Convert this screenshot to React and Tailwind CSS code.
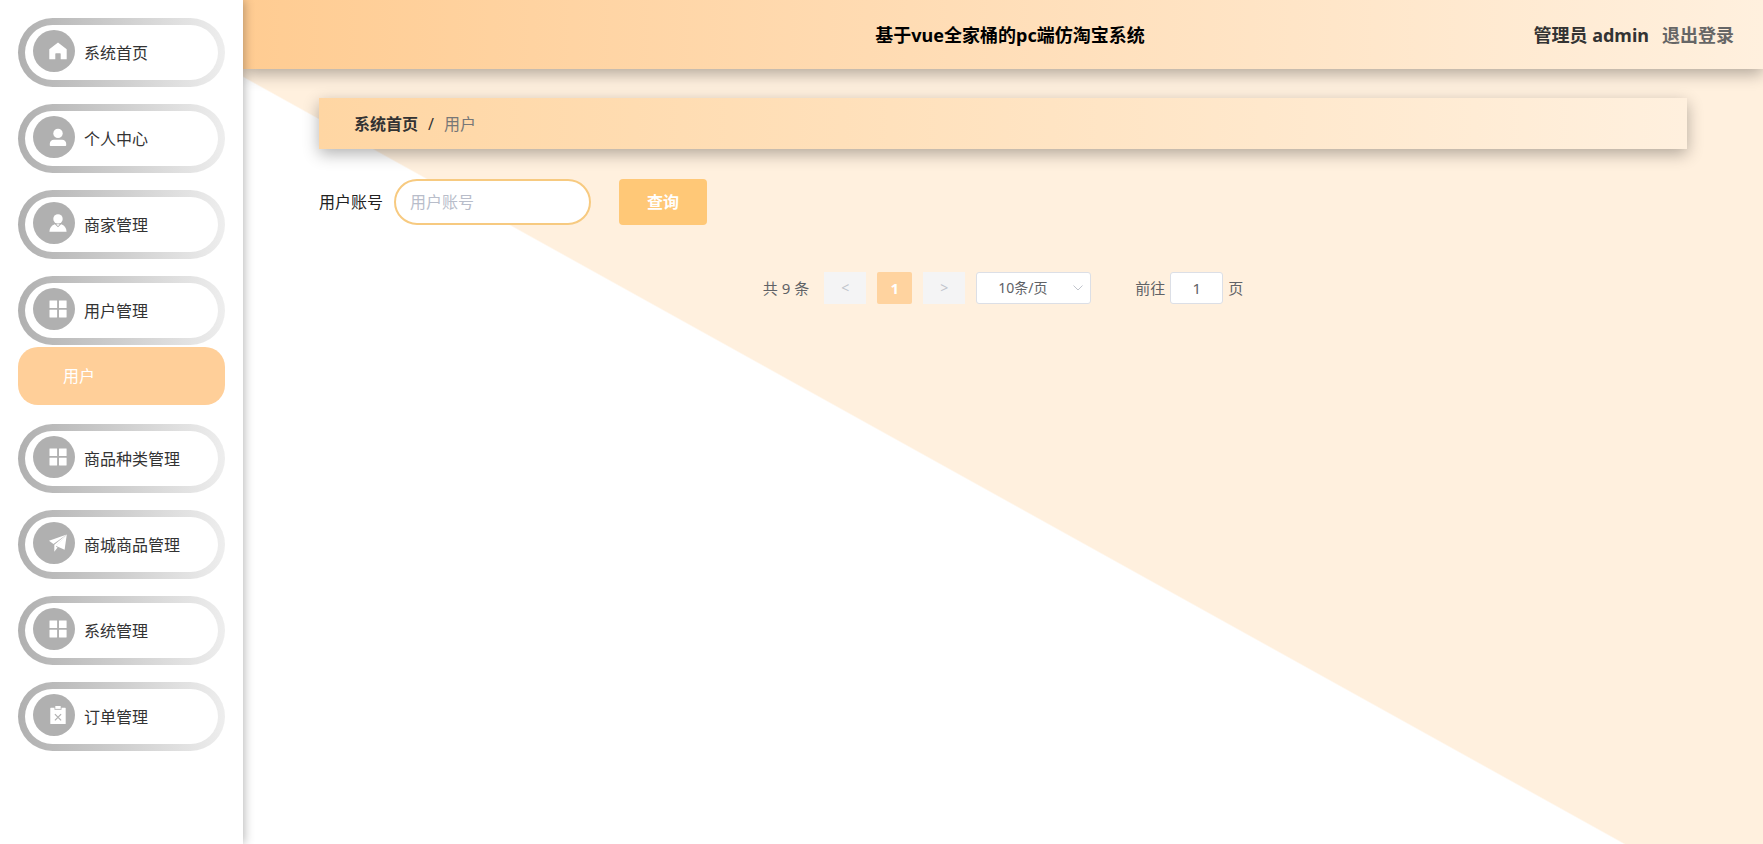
const HomeIcon = () => (
  <svg viewBox="0 0 18 18" className="size-[18px] fill-white" aria-hidden="true">
    <path d="M9 .6 17.700 7.200V16.900a.3.300 0 0 1-.3.300H11.700V11.900a.6.600 0 0 0-.6-.6H6.900a.6.600 0 0 0-.6.600V17.200H.6a.3.300 0 0 1-.3-.3V7.200Z" />
  </svg>
)

const UserIcon = () => (
  <svg viewBox="0 0 18 18" className="size-[18px] fill-white" aria-hidden="true">
    <circle cx="9" cy="5.4" r="4.7" />
    <path d="M5 11.8h8c2.6 0 4.2 1.7 4.2 4v1.5a.7.7 0 0 1-.7.7h-15a.7.7 0 0 1-.7-.7v-1.5c0-2.3 1.6-4 4.2-4Z" />
  </svg>
)

const CustomIcon = () => (
  <svg viewBox="0 0 18 18" className="size-[18px] fill-white" aria-hidden="true">
    <circle cx="9" cy="4.9" r="4.7" />
    <path d="M5.800 10.200 9 13.200 12.200 10.200c3.200 1 5.200 3.700 5.400 7.500H.4C.6 13.900 2.600 11.200 5.800 10.200Z" />
    <path d="M7.400 10.300h3.200L9 12.300Z" />
  </svg>
)

const MenuIcon = () => (
  <svg viewBox="0 0 18 18" className="size-[18px] fill-white" aria-hidden="true">
    <rect x=".5" y=".5" width="7.6" height="7.6" rx=".3" />
    <rect x="10" y=".5" width="7.6" height="7.6" rx=".3" />
    <rect x=".5" y="9.8" width="7.6" height="7.6" rx=".3" />
    <rect x="10" y="9.8" width="7.6" height="7.6" rx=".3" />
  </svg>
)

const PromotionIcon = () => (
  <svg viewBox="0 0 18 18" className="size-[18px] fill-white" aria-hidden="true">
    <path d="M17.8.4 0 6.800l4.400 3.100Z" />
    <path d="M17.800.4 5.300 10.700v7.100l3.300-4.200-1.700-.9Z" />
    <path d="M17.800.4 7.200 12.100l8.400 3.700Z" />
  </svg>
)

const ReleaseIcon = () => (
  <svg viewBox="0 0 18 18" className="size-[18px]" aria-hidden="true">
    <path className="fill-white" d="M1.8 1.7h3.7v2h7v-2h3.7a.5.5 0 0 1 .5.5v15.2a.5.5 0 0 1-.5.5H1.8a.5.5 0 0 1-.5-.5V2.2a.5.5 0 0 1 .5-.5Z" />
    <path className="fill-white" d="M6.300 0h5.400v2.900H6.300Z" />
    <path className="fill-none stroke-[#b0b0b0]" strokeWidth="1.2" d="m5.900 8.200 6.200 6.200m0-6.200-6.200 6.200" />
  </svg>
)

const menus = [
  { title: "系统首页", Icon: HomeIcon },
  { title: "个人中心", Icon: UserIcon },
  { title: "商家管理", Icon: CustomIcon },
  { title: "用户管理", Icon: MenuIcon, children: ["用户"] },
  { title: "商品种类管理", Icon: MenuIcon },
  { title: "商城商品管理", Icon: PromotionIcon },
  { title: "系统管理", Icon: MenuIcon },
  { title: "订单管理", Icon: ReleaseIcon },
]

const MenuItem = ({ menu }) => {
  const { title, Icon, children } = menu

  return (
    <li>
      <button className="block w-full h-[69px] p-[7px] rounded-full bg-linear-to-r from-[#b0b0b0] to-[#eeeeee] cursor-pointer">
        <span className="flex items-center h-full pl-2 rounded-full bg-white">
          <span className="flex items-center justify-end size-[42px] mb-1 pr-2 rounded-full bg-[#b0b0b0]">
            <Icon />
          </span>
          <span className="ml-[9px] text-base text-[#333]">{title}</span>
        </span>
      </button>
      {children && (
        <ul className="my-[2px]">
          {children.map((child) => (
            <li key={child}>
              <a href="#" className="flex items-center h-[58px] pl-[45px] rounded-[20px] bg-[#ffcf99] text-white">{child}</a>
            </li>
          ))}
        </ul>
      )}
    </li>
  )
}

const Sidebar = () => (
  <aside className="relative z-10 w-[243px] shrink-0 px-[18px] pt-[18px] bg-white shadow-[1px_0_10px_rgba(0,0,0,0.3)]">
    <nav>
      <ul className="flex flex-col gap-[17px]">
        {menus.map((menu) => (
          <MenuItem key={menu.title} menu={menu} />
        ))}
      </ul>
    </nav>
  </aside>
)

const Header = () => (
  <header className="grid grid-cols-[1fr_auto_1fr] items-center h-[69px] pl-[43px] pr-[29px] text-lg font-bold bg-linear-to-r from-[#ffcc92] to-[#fff0de] shadow-[0_5px_15px_rgba(0,0,0,0.3)]">
    <h1 className="col-start-2 text-black">基于vue全家桶的pc端仿淘宝系统</h1>
    <div className="flex justify-end gap-[13px]">
      <span className="text-[#333]">管理员 admin</span>
      <button className="text-[#666] cursor-pointer">退出登录</button>
    </div>
  </header>
)

const Breadcrumb = () => (
  <nav className="flex items-center h-[51px] px-[35px] bg-linear-to-r from-[#ffd6a3] to-[#fff0de] shadow-[0_5px_15px_rgba(0,0,0,0.3)]">
    <a href="#" className="font-bold text-[#333]">系统首页</a>
    <span className="mx-[10px] text-[#333]">/</span>
    <span className="text-[#777]">用户</span>
  </nav>
)

const SearchForm = () => (
  <form className="flex items-center mt-[30px]" onSubmit={(e) => e.preventDefault()}>
    <label htmlFor="account" className="text-[#222]">用户账号</label>
    <input
      id="account"
      type="text"
      placeholder="用户账号"
      className="w-[197px] h-[46px] ml-[11px] px-[14px] rounded-full border-2 border-[#f7ca80] bg-white text-[#606266] placeholder:text-[#b8bdca] outline-none"
    />
    <button className="w-[88px] h-[46px] ml-[28px] rounded-[4px] bg-[#ffc877] font-bold text-white cursor-pointer">查询</button>
  </form>
)

const Pagination = () => (
  <div className="flex items-center justify-center mt-[47px] text-[15px] text-[#606266]">
    <span>共 9 条</span>
    <button disabled className="w-[42px] h-8 ml-[15px] bg-[#f4f4f5] text-sm text-[#c0c4cc]">&lt;</button>
    <button className="w-[35px] h-8 mx-[11px] rounded-[2px] bg-[#ffd39f] font-bold text-white">1</button>
    <button disabled className="w-[42px] h-8 bg-[#f4f4f5] text-sm text-[#c0c4cc]">&gt;</button>
    <div className="relative ml-[11px]">
      <select aria-label="每页条数" className="block w-[115px] h-8 pl-[21px] appearance-none rounded-[3px] border border-[#dcdfe6] bg-white text-sm outline-none">
        <option>10条/页</option>
      </select>
      <svg viewBox="0 0 10 6" className="absolute right-2 top-[13px] w-[10px] h-[6px] fill-none stroke-[#c0c4cc] pointer-events-none" aria-hidden="true">
        <path d="m.5.500 4.500 4.500L9.500.5" />
      </svg>
    </div>
    <label htmlFor="page" className="ml-[44px]">前往</label>
    <input id="page" type="text" defaultValue="1" className="w-[53px] h-8 mx-[5px] rounded-[3px] border border-[#dcdfe6] bg-white text-center outline-none" />
    <span>页</span>
  </div>
)

const App = () => {
  return (
    <div className="flex min-h-screen text-base font-['Noto_Sans','Noto_Sans_CJK_SC',sans-serif]">
      <Sidebar />
      <div className="flex-1 min-w-0 bg-[linear-gradient(to_top_right,#fff_45.4%,#fff0de_45.5%)]">
        <Header />
        <main className="px-[5%] pt-[29px]">
          <Breadcrumb />
          <SearchForm />
          <Pagination />
        </main>
      </div>
    </div>
  )
}

export default App
